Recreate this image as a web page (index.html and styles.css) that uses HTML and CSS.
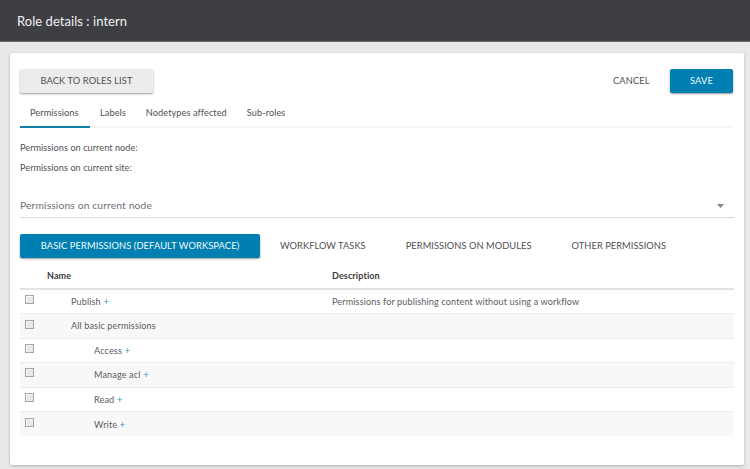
FILE: index.html
```html
<!DOCTYPE html>
<html lang="en">
<head>
<meta charset="utf-8">
<title>Role details : intern</title>
<link rel="stylesheet" href="styles.css">
</head>
<body>
<header class="topbar"><h1 class="title">Role details : intern</h1></header>
<main class="card">
  <div class="actions">
    <button class="btn btn-grey">BACK TO ROLES LIST</button>
    <div class="actions-right">
      <button class="btn btn-flat">CANCEL</button>
      <button class="btn btn-blue">SAVE</button>
    </div>
  </div>
  <nav class="tabs">
    <a class="tab tab-active">Permissions</a>
    <a class="tab">Labels</a>
    <a class="tab">Nodetypes affected</a>
    <a class="tab">Sub-roles</a>
  </nav>
  <p class="info info-first">Permissions on current node:</p>
  <p class="info">Permissions on current site:</p>
  <div class="select">
    <span>Permissions on current node</span>
    <svg class="caret" width="7" height="4" viewBox="0 0 7 4"><path d="M0 0h7L3.5 4z" fill="#85868c"/></svg>
  </div>
  <div class="subtabs">
    <button class="btn btn-blue subtab-main">BASIC PERMISSIONS (DEFAULT WORKSPACE)</button>
    <button class="btn btn-flat subtab">WORKFLOW TASKS</button>
    <button class="btn btn-flat subtab">PERMISSIONS ON MODULES</button>
    <button class="btn btn-flat subtab">OTHER PERMISSIONS</button>
  </div>
  <div class="table">
    <div class="row head"><span class="c-check"></span><span class="c-name">Name</span><span>Description</span></div>
    <div class="row"><span class="c-check"><i class="box"></i></span><span class="c-name indent1">Publish <b class="plus">+</b></span><span>Permissions for publishing content without using a workflow</span></div>
    <div class="row alt"><span class="c-check"><i class="box"></i></span><span class="c-name indent1">All basic permissions</span></div>
    <div class="row"><span class="c-check"><i class="box"></i></span><span class="c-name indent2">Access <b class="plus">+</b></span></div>
    <div class="row alt"><span class="c-check"><i class="box"></i></span><span class="c-name indent2">Manage acl <b class="plus">+</b></span></div>
    <div class="row"><span class="c-check"><i class="box"></i></span><span class="c-name indent2">Read <b class="plus">+</b></span></div>
    <div class="row alt last"><span class="c-check"><i class="box"></i></span><span class="c-name indent2">Write <b class="plus">+</b></span></div>
  </div>
</main>
</body>
</html>
```
FILE: styles.css
```css
* { box-sizing: border-box; }
html, body { height: 100%; }
body {
  margin: 0;
  background: #e9e9e9;
  font-family: "Lato", "Open Sans", sans-serif;
  color: #4a4a4f;
  font-size: 9.3px;
  overflow: hidden;
}
.topbar {
  height: 42px;
  background: #3e3f43;
  border-bottom: 1px solid #6b6c70;
  display: flex;
  align-items: center;
  padding-left: 17px;
}
.title {
  margin: 0;
  font-size: 13px;
  font-weight: 400;
  color: #f2f2f2;
  letter-spacing: 0.05px;
}
.card {
  margin: 11px 6px 0 10px;
  height: 412px;
  padding: 16px 10px 0;
  background: #fff;
  border-radius: 2px;
  box-shadow: 0 1px 3px rgba(0,0,0,.25);
}
.actions { display: flex; justify-content: space-between; height: 24px; }
.actions-right { display: flex; align-items: stretch; padding-right: 1px; }
.btn {
  border: 0;
  font: inherit;
  font-size: 9.3px;
  letter-spacing: .11px;
  color: #505054;
  background: none;
  padding: 0 0 1px;
  border-radius: 2px;
}
.btn-grey {
  width: 133px;
  background: #ececec;
  box-shadow: 0 1px 2px rgba(0,0,0,.4);
}
.btn-blue {
  width: 63px;
  background: #0080b2;
  color: #f4fafc;
  box-shadow: 0 1px 2px rgba(0,0,0,.4);
}
.btn-flat { width: 36px; margin-right: 21px; white-space: nowrap; }
.tabs {
  display: flex;
  height: 35px;
  border-bottom: 2px solid #f5f5f5;
}
.tab {
  display: flex;
  align-items: center;
  padding: 3px 10px 0;
  height: 35px;
  font-size: 9.2px;
  letter-spacing: .07px;
  color: #505054;
}
.tab-active { border-bottom: 2px solid #0e7fa8; width: 70px; padding-top: 5px; }
.info { margin: 0; height: 20px; line-height: 20px; font-size: 9.1px; letter-spacing: .07px; color: #505054; }
.info-first { margin-top: 10px; }
.select {
  margin-top: 16px;
  height: 24px;
  display: flex;
  justify-content: space-between;
  align-items: center;
  border-bottom: 1px solid #d9d9d9;
  font-size: 10.3px;
  color: #707075;
  padding: 0 10px 2px 0;
  letter-spacing: .13px;
}
.caret { margin-top: 2px; }
.subtabs { display: flex; height: 24px; margin-top: 16px; }
.subtab-main { width: 240px; }
.subtab { width: auto; margin: 0; padding: 0 20px 1px; letter-spacing: .05px; }
.table { margin-top: 8px; }
.row {
  display: flex;
  align-items: center;
  height: 24.4px;
  padding-bottom: 1px;
  border-bottom: 1px solid #ececec;
  font-size: 9.1px;
  letter-spacing: .12px;
  color: #5c5c61;
}
.row.alt { background: #f8f8f8; }
.row.last { border-bottom: 0; }
.row.head {
  height: 24px;
  padding-bottom: 4px;
  border-bottom: 2px solid #e3e3e3;
  font-weight: 700;
  color: #3c3c40;
  font-size: 9px;
}
.c-check { width: 27px; flex: none; padding-left: 5px; display: flex; margin-top: -3px; }
.c-name { width: 285px; flex: none; }
.indent1 { padding-left: 24px; }
.indent2 { padding-left: 47px; }
.box {
  width: 9px;
  height: 9px;
  background: #e8e8e8;
  border: 1px solid #a5a5a5;
  box-shadow: inset 1px 1px 0 #f8f8f8;
}
.plus { font-weight: 400; font-size: 10px; color: #2f9cc4; }
```
